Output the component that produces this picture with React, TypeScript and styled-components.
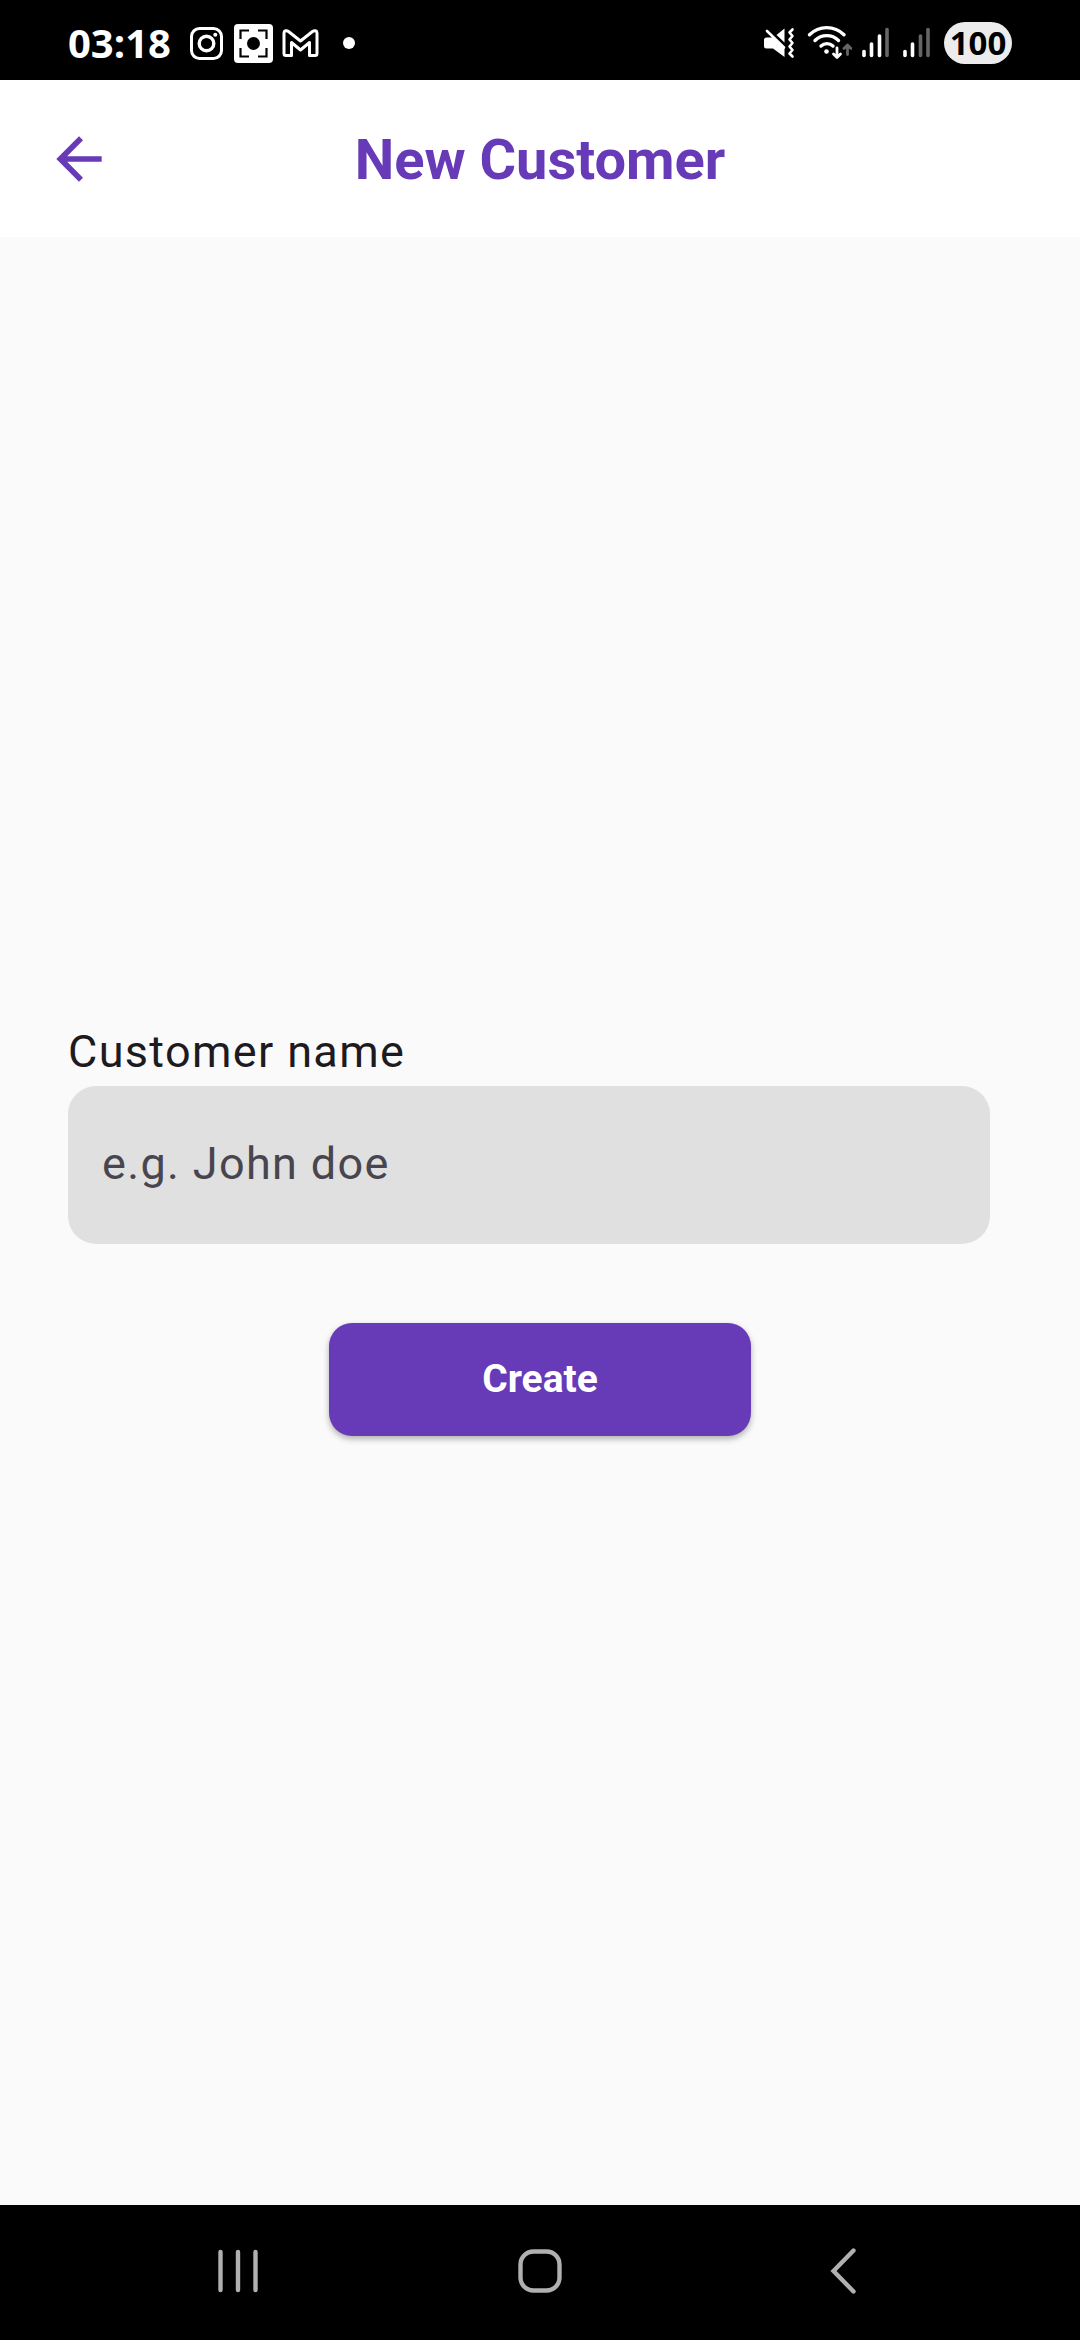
import React from "react";
import styled, { createGlobalStyle } from "styled-components";

const color = {
  primary: "#673ab7",
  surface: "#fafafa",
  field: "#e0e0e0",
  text: "#1d1b20",
  hint: "#49454f",
  navIcon: "#b0b0b0",
};

const GlobalStyle = createGlobalStyle`
  *, *::before, *::after { box-sizing: border-box; }
  body {
    margin: 0;
    background: ${color.surface};
    font-family: Roboto, "Liberation Sans", sans-serif;
  }
  svg { display: block; flex: none; }
`;

const Screen = styled.div`
  min-height: 100vh;
  display: flex;
  flex-direction: column;
  background: ${color.surface};
`;

const StatusBar = styled.header`
  height: 80px;
  padding: 6px 68px 0;
  display: flex;
  align-items: center;
  justify-content: space-between;
  background: #000;
  color: #fff;
  font-family: "Open Sans", "Noto Sans", sans-serif;
  font-weight: 700;
`;

const StatusGroup = styled.div<{ $gap: number }>`
  display: flex;
  align-items: center;
  gap: ${({ $gap }) => $gap}px;
`;

const Clock = styled.time`
  font-size: 40px;
  line-height: 42px;
`;

const Notifications = styled.div`
  display: flex;
  align-items: center;
`;

const Battery = styled.span`
  min-width: 68px;
  height: 42px;
  border-radius: 21px;
  display: flex;
  align-items: center;
  justify-content: center;
  background: #ececec;
  color: #000;
  font-size: 33px;
  line-height: 42px;
`;

const AppBar = styled.div`
  height: 157px;
  padding: 0 45px;
  display: grid;
  grid-template-columns: 1fr auto 1fr;
  align-items: center;
  background: #fff;
  color: ${color.primary};
`;

const IconButton = styled.button`
  width: 68px;
  height: 68px;
  padding: 0;
  border: 0;
  background: none;
  color: inherit;
  cursor: pointer;
`;

const Title = styled.h1`
  margin: 0;
  padding-top: 3px;
  font-size: 56px;
  line-height: 68px;
  font-weight: 700;
`;

const Form = styled.form`
  flex: 1;
  padding: 11px 90px 0 68px;
  display: flex;
  flex-direction: column;
  justify-content: center;
`;

const FieldLabel = styled.label`
  color: ${color.text};
  font-size: 45px;
  line-height: 68px;
  letter-spacing: 0.03em;
`;

const TextField = styled.input`
  width: 100%;
  height: 158px;
  padding: 0 34px 2px;
  border: 0;
  border-radius: 28px;
  outline: none;
  background: ${color.field};
  color: ${color.text};
  font-family: inherit;
  font-size: 45px;
  line-height: 68px;
  letter-spacing: 0.03em;
  &::placeholder {
    color: ${color.hint};
    opacity: 1;
  }
`;

const Actions = styled.div`
  margin: 79px -22px 0 0;
  display: flex;
  justify-content: center;
`;

const SubmitButton = styled.button`
  width: 422px;
  height: 113px;
  border: 0;
  border-radius: 23px;
  background: ${color.primary};
  color: #fff;
  font-family: inherit;
  font-size: 39px;
  font-weight: 700;
  box-shadow: 0 3px 6px rgba(0, 0, 0, 0.3);
  cursor: pointer;
`;

const NavBar = styled.nav`
  height: 135px;
  padding: 0 84px 4px;
  display: grid;
  grid-template-columns: repeat(3, 1fr);
  background: #000;
`;

const NavButton = styled.button`
  padding: 0;
  border: 0;
  display: flex;
  align-items: center;
  justify-content: center;
  background: none;
  color: ${color.navIcon};
  cursor: pointer;
`;

const InstagramIcon = () => (
  <svg width="47" height="42" viewBox="0 0 47 42" fill="none" stroke="#fff" aria-hidden="true">
    <rect x="8.5" y="6.5" width="30" height="30" rx="8" strokeWidth="3" />
    <circle cx="23.5" cy="21.5" r="7.3" strokeWidth="3.4" />
    <circle cx="32.3" cy="12.8" r="2" fill="#fff" stroke="none" />
  </svg>
);

const CaptureIcon = () => (
  <svg width="47" height="42" viewBox="0 0 47 42" aria-hidden="true">
    <rect x="4" y="2" width="39" height="39" rx="4" fill="#fff" />
    <circle cx="23.5" cy="21.5" r="6.5" />
    <path
      d="M10.5 17V8.5H19M28 8.5H36.5V17M36.5 26V34.5H28M19 34.5H10.5V26"
      fill="none"
      stroke="#000"
      strokeWidth="2.2"
    />
  </svg>
);

const GmailIcon = () => (
  <svg width="47" height="42" viewBox="0 0 47 42" fill="none" aria-hidden="true">
    <path
      d="M7 11V31.500a2 2 0 0 0 2 2h5.500V20.500L23.500 28 32.500 20.500V33.500H38a2 2 0 0 0 2-2V11c0-2.500-2.500-3-4.500-1.500L23.500 19 11.500 9.500C9.500 8 7 8.500 7 11Z"
      stroke="#fff"
      strokeWidth="3"
      strokeLinejoin="round"
    />
  </svg>
);

const MoreDot = () => (
  <svg width="47" height="42" viewBox="0 0 47 42" aria-hidden="true">
    <circle cx="25" cy="21" r="6" fill="#fff" />
  </svg>
);

const MuteIcon = () => (
  <svg width="32" height="42" viewBox="0 0 32 42" fill="#fff" aria-hidden="true">
    <path d="M2.500 15.500H9L20.500 26.500V35L9 26.500H2.500A2.500 2.500 0 0 1 0 24V18A2.500 2.500 0 0 1 2.500 15.500Z" />
    <path d="M20.500 6.500V20.500L12.500 13Z" />
    <path
      d="M3 9 20 25.500M28.500 7.500 25.500 10.500 28.500 14 25.500 17.500 28.500 21 25.500 24.500 28.500 28 25.500 31.500 28.500 34.500"
      fill="none"
      stroke="#fff"
      strokeWidth="2.600"
      strokeLinecap="round"
      strokeLinejoin="round"
    />
  </svg>
);

const WifiIcon = () => (
  <svg width="46" height="42" viewBox="0 0 46 42" fill="none" strokeLinecap="round" aria-hidden="true">
    <g stroke="#fff" strokeWidth="3.400">
      <path d="M3.500 12.800C13 3.200 28.500 3.200 38 12.800" />
      <path d="M9 18.500C15.500 12 26 12 32.500 18.500" />
      <path d="M15 24C18.500 20.800 23.500 20.800 27 24" />
      <path d="M31 26V35M27.500 32 31 35.500 34.500 32" strokeWidth="2.800" strokeLinejoin="round" />
    </g>
    <circle cx="20.500" cy="29.500" r="2.300" fill="#fff" />
    <path
      d="M41.500 32.500V23.500M38 26.500 41.500 23 45 26.500"
      stroke="#666"
      strokeWidth="2.800"
      strokeLinejoin="round"
    />
  </svg>
);

const bars = [
  { x: 2, top: 29.5 },
  { x: 9.5, top: 22 },
  { x: 17.5, top: 14 },
  { x: 25, top: 7.5 },
];

const SignalIcon = ({ level }: { level: number }) => (
  <svg width="31" height="42" viewBox="0 0 31 42" strokeWidth="3.600" strokeLinecap="round" aria-hidden="true">
    {bars.map(({ x, top }, i) => (
      <path key={x} d={`M${x} ${top}V33.500`} stroke={i < level ? "#fff" : "#666"} />
    ))}
  </svg>
);

const BackArrow = () => (
  <svg width="68" height="68" viewBox="0 0 24 24" fill="currentColor" aria-hidden="true">
    <path d="M20 11H7.830l5.590-5.590L12 4l-8 8 8 8 1.410-1.410L7.830 13H20v-2z" />
  </svg>
);

const navIcon = {
  width: 48,
  height: 48,
  viewBox: "0 0 48 48",
  fill: "none",
  stroke: "currentColor",
  strokeWidth: 4.4,
  strokeLinecap: "round" as const,
  "aria-hidden": true,
};

export default function App() {
  return (
    <Screen>
      <GlobalStyle />
      <StatusBar>
        <StatusGroup $gap={12}>
          <Clock>03:18</Clock>
          <Notifications>
            <InstagramIcon />
            <CaptureIcon />
            <GmailIcon />
            <MoreDot />
          </Notifications>
        </StatusGroup>
        <StatusGroup $gap={10}>
          <MuteIcon />
          <WifiIcon />
          <SignalIcon level={3} />
          <SignalIcon level={2} />
          <Battery>100</Battery>
        </StatusGroup>
      </StatusBar>

      <AppBar>
        <IconButton type="button" aria-label="Back">
          <BackArrow />
        </IconButton>
        <Title>New Customer</Title>
      </AppBar>

      <Form onSubmit={(e) => e.preventDefault()}>
        <FieldLabel htmlFor="customer-name">Customer name</FieldLabel>
        <TextField id="customer-name" type="text" placeholder="e.g. John doe" />
        <Actions>
          <SubmitButton type="submit">Create</SubmitButton>
        </Actions>
      </Form>

      <NavBar>
        <NavButton type="button" aria-label="Recent apps">
          <svg {...navIcon}>
            <path d="M8.500 5V43M26 5V43M43.500 5V43" />
          </svg>
        </NavButton>
        <NavButton type="button" aria-label="Home">
          <svg {...navIcon}>
            <rect x="4.500" y="4.500" width="39" height="39" rx="13" />
          </svg>
        </NavButton>
        <NavButton type="button" aria-label="Back">
          <svg {...navIcon}>
            <path d="M33.500 3.500 13.500 24 33.500 44.500" />
          </svg>
        </NavButton>
      </NavBar>
    </Screen>
  );
}
